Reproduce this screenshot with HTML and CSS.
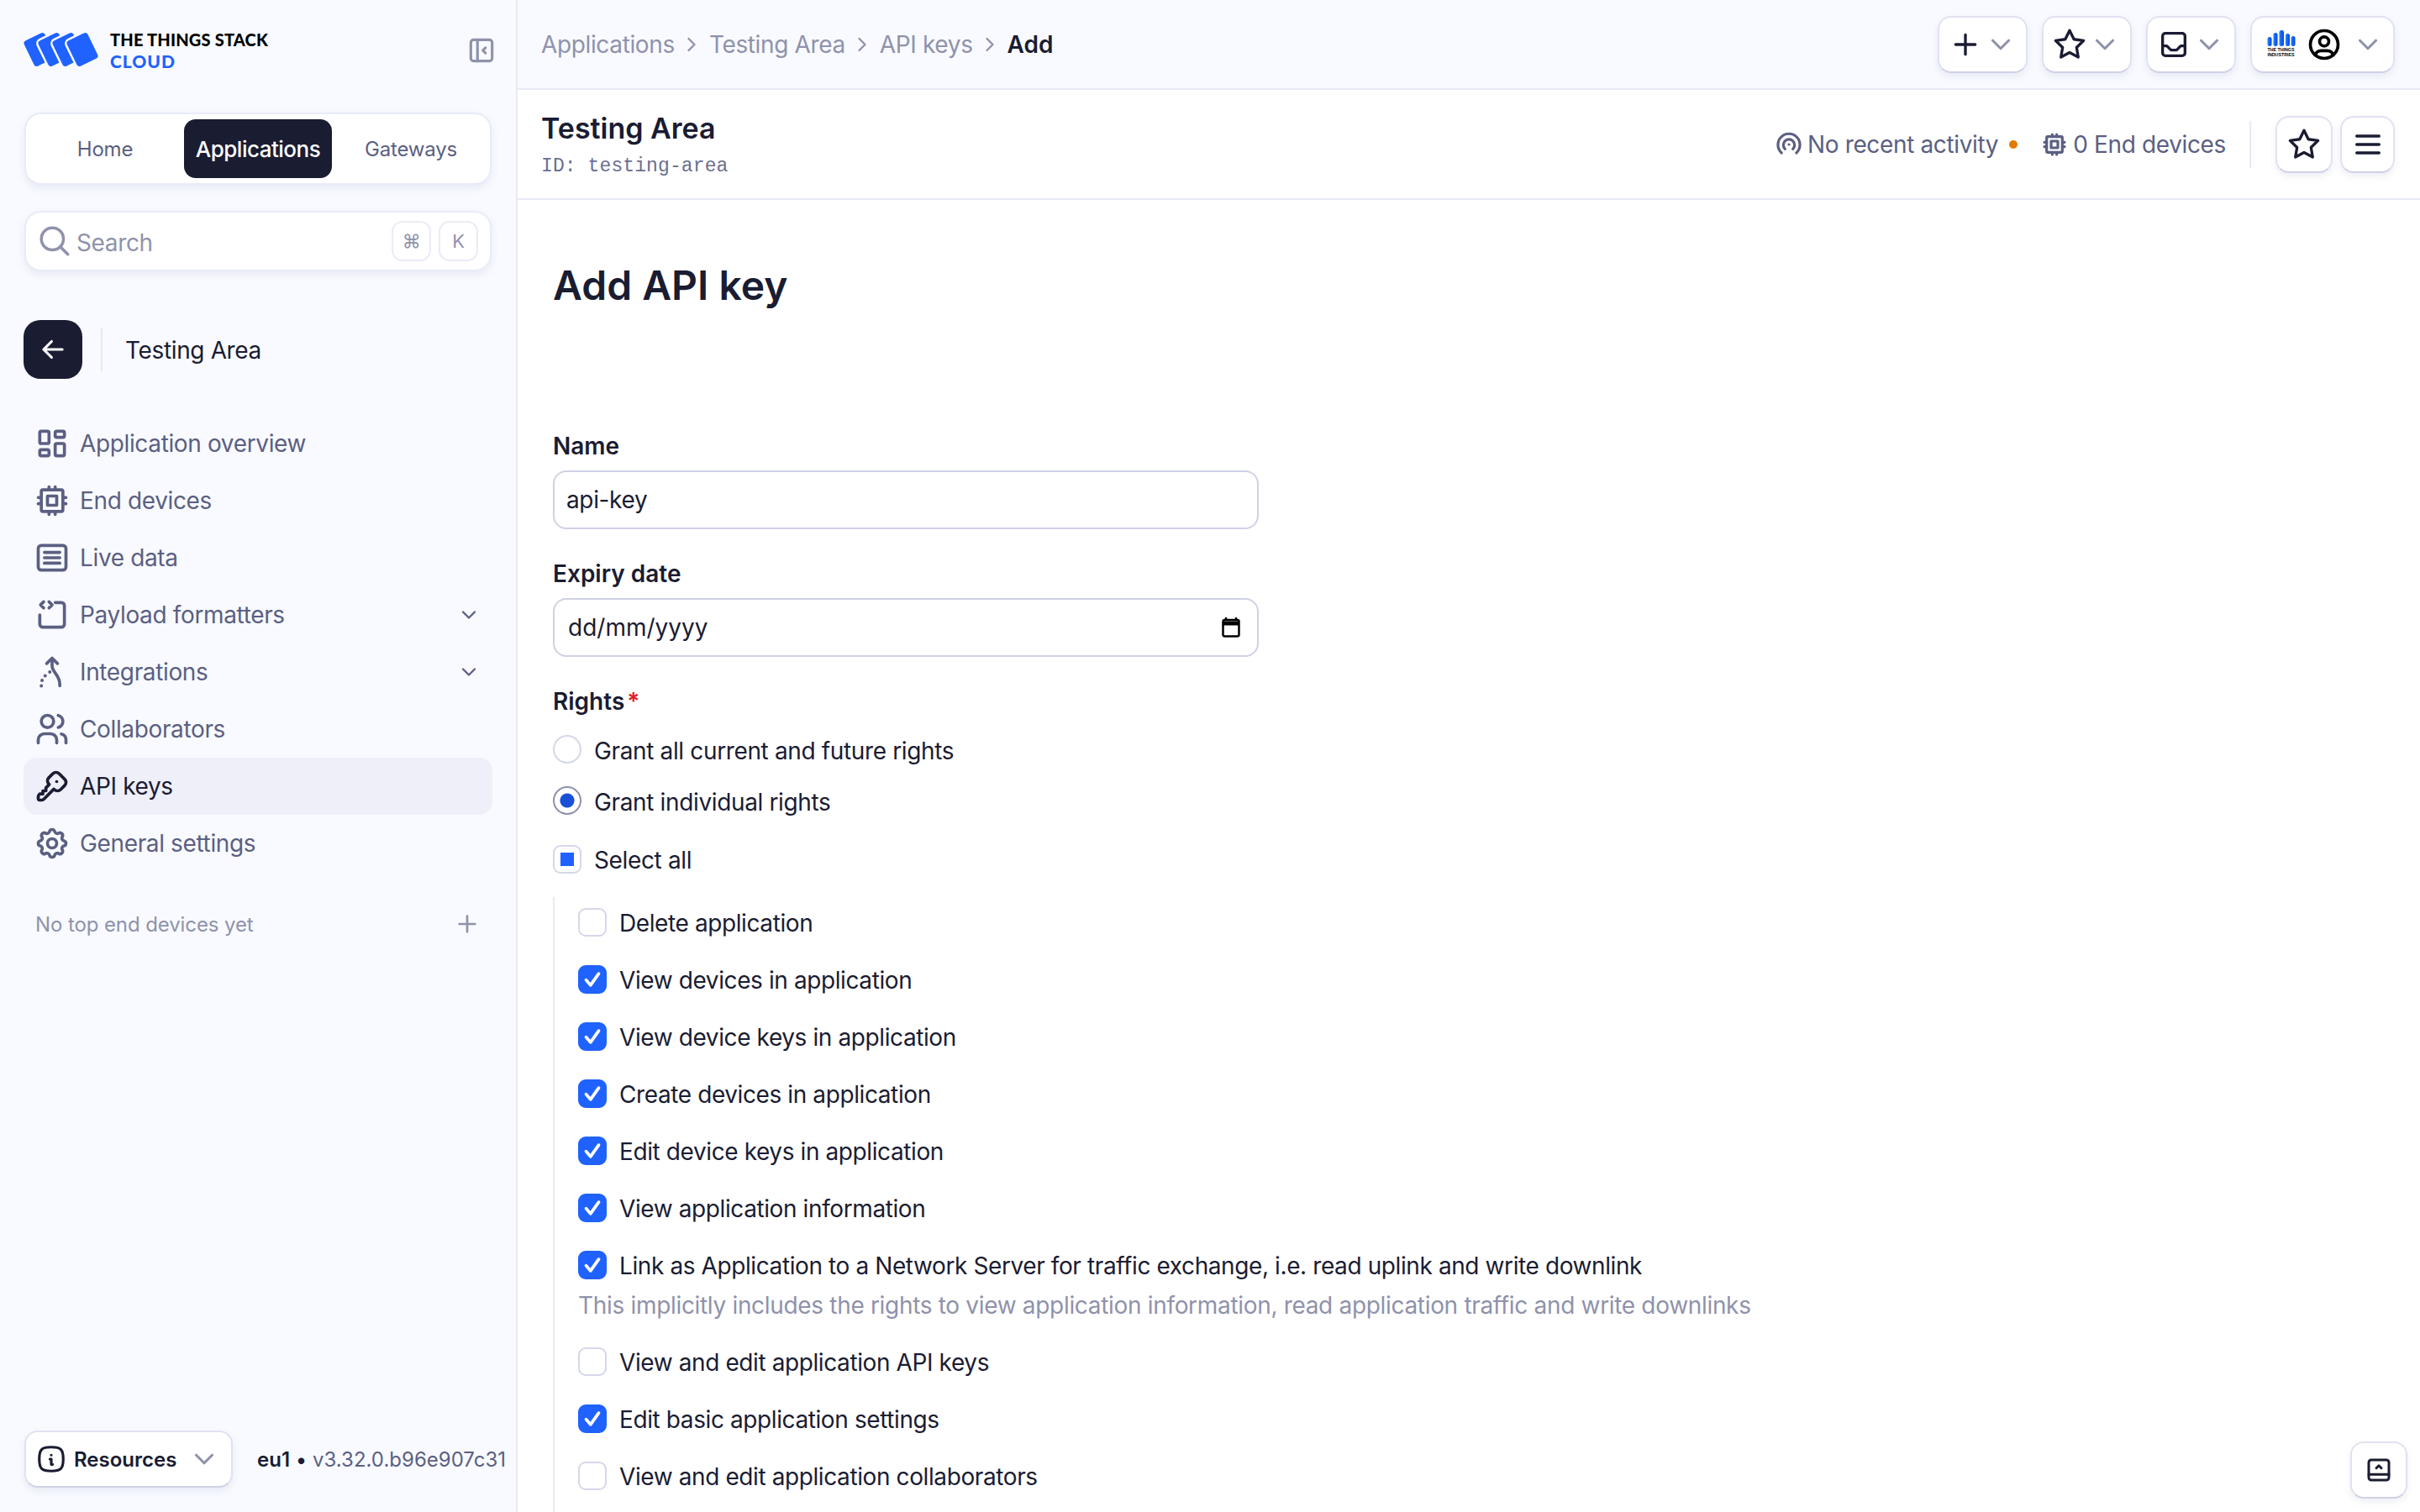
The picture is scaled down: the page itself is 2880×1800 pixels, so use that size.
FILE: index.html
```html
<!DOCTYPE html>
<html lang="en">
<head>
    <meta charset="UTF-8">
    <meta name="viewport" content="width=device-width, initial-scale=1.0">
    <title>Add API key</title>

    <link rel="stylesheet" href="styles.css">
</head>
<body>

    <!-- Icon set, used through <use> below -->
    <svg class="sprite" xmlns="http://www.w3.org/2000/svg">
        <symbol id="i-chevron" viewBox="0 0 24 24"><path d="M6 9l6 6 6-6"/></symbol>
        <symbol id="i-chevron-right" viewBox="0 0 24 24"><path d="M9 6l6 6-6 6"/></symbol>
        <symbol id="i-plus" viewBox="0 0 24 24"><path d="M12 5v14M5 12h14"/></symbol>
        <symbol id="i-star" viewBox="0 0 24 24"><path d="M12 17.75l-6.172 3.245l1.179-6.873l-5-4.867l6.9-1l3.086-6.253l3.086 6.253l6.9 1l-5 4.867l1.179 6.873z"/></symbol>
        <symbol id="i-inbox" viewBox="0 0 24 24"><rect x="4" y="4" width="16" height="16" rx="2"/><path d="M4 13h3l3 3h4l3-3h3"/></symbol>
        <symbol id="i-user" viewBox="0 0 24 24"><circle cx="12" cy="12" r="9"/><circle cx="12" cy="10" r="3"/><path d="M6.168 18.849a4 4 0 0 1 3.832-2.849h4a4 4 0 0 1 3.834 2.855"/></symbol>
        <symbol id="i-cpu" viewBox="0 0 24 24"><rect x="5" y="5" width="14" height="14" rx="1"/><path d="M9 9h6v6H9zM3 10h2M3 14h2M10 3v2M14 3v2M21 10h-2M21 14h-2M14 21v-2M10 21v-2"/></symbol>
        <symbol id="i-signal" viewBox="0 0 24 24"><path d="M8.5 16a5 5 0 1 1 7 0M5.4 19.5a9.8 9.8 0 1 1 13.2 0"/><path d="M12 12v.01"/></symbol>
        <symbol id="i-dashboard" viewBox="0 0 24 24"><rect x="4" y="4" width="6" height="8" rx="1"/><rect x="4" y="16" width="6" height="4" rx="1"/><rect x="14" y="12" width="6" height="8" rx="1"/><rect x="14" y="4" width="6" height="4" rx="1"/></symbol>
        <symbol id="i-live" viewBox="0 0 24 24"><rect x="3" y="4" width="18" height="16" rx="2"/><path d="M7 8.5h10M7 12h10M7 15.5h10"/></symbol>
        <symbol id="i-payload" viewBox="0 0 24 24"><path d="M14 4h4a2 2 0 0 1 2 2v12a2 2 0 0 1-2 2H6a2 2 0 0 1-2-2v-6"/><path d="M6.500 3.500L4.500 5.500l2 2M10 3.500l2 2-2 2"/></symbol>
        <symbol id="i-integrations" viewBox="0 0 24 24"><path d="M8.500 6.500L12 3l3.500 3.500M12 3v5c0 4 5 6 5 12v1"/><path d="M5 21v.01M5.500 17.500v.01M7.500 14.500v.01M10.500 12v.01" stroke-width="2.2"/></symbol>
        <symbol id="i-users" viewBox="0 0 24 24"><circle cx="9" cy="7" r="4"/><path d="M3 21v-2a4 4 0 0 1 4-4h4a4 4 0 0 1 4 4v2M16 3.130a4 4 0 0 1 0 7.750M21 21v-2a4 4 0 0 0-3-3.850"/></symbol>
        <symbol id="i-key" viewBox="0 0 24 24"><path d="M16.555 3.843l3.602 3.602a2.877 2.877 0 0 1 0 4.069l-2.643 2.643a2.877 2.877 0 0 1-4.069 0l-.301-.301l-6.558 6.558a2 2 0 0 1-1.239.578l-.175.008h-1.172a1 1 0 0 1-.993-.883l-.007-.117v-1.172a2 2 0 0 1 .467-1.284l.119-.13l.414-.414h2v-2h2v-2l2.144-2.144l-.301-.301a2.877 2.877 0 0 1 0-4.069l2.643-2.643a2.877 2.877 0 0 1 4.069 0z"/><path d="M15 9h.01"/></symbol>
        <symbol id="i-settings" viewBox="0 0 24 24"><path d="M10.325 4.317c.426-1.756 2.924-1.756 3.35 0a1.724 1.724 0 0 0 2.573 1.066c1.543-.94 3.31.826 2.37 2.37a1.724 1.724 0 0 0 1.065 2.572c1.756.426 1.756 2.924 0 3.35a1.724 1.724 0 0 0-1.066 2.573c.94 1.543-.826 3.31-2.37 2.37a1.724 1.724 0 0 0-2.572 1.065c-.426 1.756-2.924 1.756-3.35 0a1.724 1.724 0 0 0-2.573-1.066c-1.543.94-3.31-.826-2.37-2.37a1.724 1.724 0 0 0-1.065-2.572c-1.756-.426-1.756-2.924 0-3.35a1.724 1.724 0 0 0 1.066-2.573c-.94-1.543.826-3.31 2.37-2.37c1 .608 2.296.07 2.572-1.065z"/><circle cx="12" cy="12" r="3"/></symbol>
        <symbol id="i-check" viewBox="0 0 24 24"><path d="M6 12.500l4.200 5L18 6.500"/></symbol>
    </svg>

    <div class="app">

        <!-- Left column -->
        <aside class="sidebar">
            <div class="brand">
                <svg class="brand-mark" viewBox="0 0 100 50">
                    <g class="brand-cards">
                        <rect x="5" y="6" width="30" height="36" rx="5" transform="rotate(-26 20 24)"/>
                        <rect x="22" y="6" width="30" height="36" rx="5" transform="rotate(-26 37 24)"/>
                        <rect x="39" y="6" width="30" height="36" rx="5" transform="rotate(-26 54 24)"/>
                        <rect x="56" y="6" width="30" height="36" rx="5" transform="rotate(-26 71 24)"/>
                    </g>
                </svg>
                <div class="brand-name">
                    <span class="brand-top">THE THINGS STACK</span>
                    <span class="brand-sub">CLOUD</span>
                </div>
                <svg class="icon collapse" viewBox="0 0 24 24"><rect x="4" y="4" width="16" height="16" rx="2"/><path d="M9 4v16M15 10l-2 2 2 2"/></svg>
            </div>

            <div class="tabs">
                <a class="tab">Home</a>
                <a class="tab active">Applications</a>
                <a class="tab">Gateways</a>
            </div>

            <div class="search">
                <svg class="icon" viewBox="0 0 24 24"><circle cx="10.500" cy="10.500" r="7.500"/><path d="M21 21l-5.200-5.200"/></svg>
                <span class="search-text">Search</span>
                <kbd>⌘</kbd>
                <kbd>K</kbd>
            </div>

            <div class="context">
                <button class="back"><svg class="icon" viewBox="0 0 24 24"><path d="M5 12h14M5 12l6 6M5 12l6-6"/></svg></button>
                <span class="context-name">Testing Area</span>
            </div>

            <nav class="nav">
                <a class="nav-item"><svg class="icon"><use href="#i-dashboard"/></svg>Application overview</a>
                <a class="nav-item"><svg class="icon"><use href="#i-cpu"/></svg>End devices</a>
                <a class="nav-item"><svg class="icon"><use href="#i-live"/></svg>Live data</a>
                <a class="nav-item"><svg class="icon"><use href="#i-payload"/></svg>Payload formatters<svg class="icon nav-more"><use href="#i-chevron"/></svg></a>
                <a class="nav-item"><svg class="icon"><use href="#i-integrations"/></svg>Integrations<svg class="icon nav-more"><use href="#i-chevron"/></svg></a>
                <a class="nav-item"><svg class="icon"><use href="#i-users"/></svg>Collaborators</a>
                <a class="nav-item current"><svg class="icon"><use href="#i-key"/></svg>API keys</a>
                <a class="nav-item"><svg class="icon"><use href="#i-settings"/></svg>General settings</a>
            </nav>

            <div class="top-devices">
                <span>No top end devices yet</span>
                <svg class="icon"><use href="#i-plus"/></svg>
            </div>

            <div class="sidebar-foot">
                <button class="btn resources">
                    <svg class="icon" viewBox="0 0 24 24"><path d="M12 9h.01M11 12h1v4h1"/><path d="M12 3c7.200 0 9 1.800 9 9s-1.800 9-9 9-9-1.800-9-9 1.800-9 9-9z"/></svg>
                    <span>Resources</span>
                    <svg class="icon chev"><use href="#i-chevron"/></svg>
                </button>
                <p class="version"><b>eu1</b> • <span>v3.32.0.b96e907c31</span></p>
            </div>
        </aside>

        <!-- Right column -->
        <main class="main">
            <header class="topbar">
                <div class="crumbs">
                    <a>Applications</a><svg class="icon"><use href="#i-chevron-right"/></svg>
                    <a>Testing Area</a><svg class="icon"><use href="#i-chevron-right"/></svg>
                    <a>API keys</a><svg class="icon"><use href="#i-chevron-right"/></svg>
                    <b>Add</b>
                </div>
                <div class="top-actions">
                    <button class="btn"><svg class="icon"><use href="#i-plus"/></svg><svg class="icon chev"><use href="#i-chevron"/></svg></button>
                    <button class="btn"><svg class="icon"><use href="#i-star"/></svg><svg class="icon chev"><use href="#i-chevron"/></svg></button>
                    <button class="btn"><svg class="icon"><use href="#i-inbox"/></svg><svg class="icon chev"><use href="#i-chevron"/></svg></button>
                    <button class="btn account">
                        <svg class="org-logo" viewBox="0 0 36 36">
                            <defs>
                                <linearGradient id="org-blue" x1="0" y1="0" x2="1" y2="0">
                                    <stop offset="0" stop-color="#1f86ff"/>
                                    <stop offset="1" stop-color="#0a3fe0"/>
                                </linearGradient>
                            </defs>
                            <g fill="url(#org-blue)">
                                <rect x="1.500" y="9" width="5" height="11" rx="2.500"/>
                                <rect x="8.500" y="4" width="5" height="16" rx="2.500"/>
                                <rect x="15.500" y="1" width="5.500" height="19" rx="2.500"/>
                                <rect x="23" y="5" width="5" height="15" rx="2.500"/>
                                <rect x="29.500" y="8" width="5" height="12" rx="2.500"/>
                            </g>
                            <text x="1.500" y="26" textLength="32" lengthAdjust="spacingAndGlyphs">THE THINGS</text>
                            <text x="1.500" y="32" textLength="32" lengthAdjust="spacingAndGlyphs">INDUSTRIES</text>
                        </svg>
                        <svg class="icon user"><use href="#i-user"/></svg>
                        <svg class="icon chev"><use href="#i-chevron"/></svg>
                    </button>
                </div>
            </header>

            <section class="page-head">
                <div>
                    <h2>Testing Area</h2>
                    <p class="app-id">ID: testing-area</p>
                </div>
                <div class="page-stats">
                    <span class="stat"><svg class="icon"><use href="#i-signal"/></svg>No recent activity<i class="dot"></i></span>
                    <span class="stat"><svg class="icon"><use href="#i-cpu"/></svg>0 End devices</span>
                    <span class="rule"></span>
                    <div class="head-btns">
                        <button class="btn square"><svg class="icon"><use href="#i-star"/></svg></button>
                        <button class="btn square narrow"><svg class="icon" viewBox="0 0 24 24"><path d="M4 6h16M4 12h16M4 18h16"/></svg></button>
                    </div>
                </div>
            </section>

            <section class="content">
                <h1>Add API key</h1>

                <form class="form">
                    <label class="label">Name</label>
                    <div class="input"><input type="text" value="api-key"></div>

                    <label class="label">Expiry date</label>
                    <div class="input">
                        <input class="date-text" type="text" value="dd/mm/yyyy">
                        <svg class="calendar" viewBox="0 0 22 24"><path d="M5 0v4M17 0v4"/><rect x="1.500" y="3" width="19" height="19.500" rx="2"/><path class="calendar-top" d="M1.500 7h19"/></svg>
                    </div>

                    <label class="label">Rights<em>*</em></label>
                    <div class="choice radio-row"><span class="radio"></span>Grant all current and future rights</div>
                    <div class="choice radio-row spaced"><span class="radio on"></span>Grant individual rights</div>
                    <div class="choice select-all"><span class="box some"></span>Select all</div>

                    <div class="rights">
                        <div class="choice"><span class="box"></span>Delete application</div>
                        <div class="choice"><span class="box on"><svg><use href="#i-check"/></svg></span>View devices in application</div>
                        <div class="choice"><span class="box on"><svg><use href="#i-check"/></svg></span>View device keys in application</div>
                        <div class="choice"><span class="box on"><svg><use href="#i-check"/></svg></span>Create devices in application</div>
                        <div class="choice"><span class="box on"><svg><use href="#i-check"/></svg></span>Edit device keys in application</div>
                        <div class="choice"><span class="box on"><svg><use href="#i-check"/></svg></span>View application information</div>
                        <div class="choice with-note"><span class="box on"><svg><use href="#i-check"/></svg></span>Link as Application to a Network Server for traffic exchange, i.e. read uplink and write downlink</div>
                        <p class="note">This implicitly includes the rights to view application information, read application traffic and write downlinks</p>
                        <div class="choice"><span class="box"></span>View and edit application API keys</div>
                        <div class="choice"><span class="box on"><svg><use href="#i-check"/></svg></span>Edit basic application settings</div>
                        <div class="choice"><span class="box"></span>View and edit application collaborators</div>
                    </div>
                </form>
            </section>

            <button class="btn float">
                <svg class="icon" viewBox="0 0 24 24"><rect x="4" y="4" width="16" height="16" rx="2"/><path d="M4 15.500h16M10 10.500l2-2 2 2"/></svg>
            </button>
        </main>
    </div>

</body>
</html>
```

FILE: styles.css
```css
* {
    box-sizing: border-box;
}

html, body {
    margin: 0;
    height: 100%;
    overflow: hidden;
}

body {
    color: #1a1c32;
    background-color: #ffffff;
    font-family: "Inter", "Liberation Sans", sans-serif;
    font-size: 28px;
    letter-spacing: -0.36px;
}

button {
    font: inherit;
    color: inherit;
    cursor: pointer;
}

p, h1, h2 {
    margin: 0;
}

.sprite {
    display: none;
}

.icon {
    display: block;
    flex: none;
    width: 40px;
    height: 40px;
    fill: none;
    stroke: currentColor;
    stroke-width: 2;
    stroke-linecap: round;
    stroke-linejoin: round;
}

.app {
    display: flex;
    height: 1800px;
}

/* For the left column */
.sidebar {
    display: flex;
    flex-direction: column;
    flex: none;
    width: 616px;
    padding: 0 28px 29px;
    background-color: #f8faff;
    border-right: 2px solid #e7e9f6;
}

.brand {
    display: flex;
    align-items: center;
    height: 120px;
    margin-bottom: 14px;
}

.brand-mark {
    flex: none;
    width: 100px;
    height: 50px;
    margin: 0 4px 0 -1px;
}

.brand-cards rect {
    fill: #1f62ff;
    stroke: #f8faff;
    stroke-width: 2.5;
}

.brand-name {
    display: flex;
    flex-direction: column;
    flex: 1;
    font-family: "Lato", sans-serif;
    font-weight: 900;
    line-height: 25px;
}

.brand-top {
    font-size: 20px;
    color: #000000;
    letter-spacing: 0.2px;
}

.brand-sub {
    font-size: 21px;
    color: #1f62ff;
    letter-spacing: 1px;
}

.collapse {
    width: 38px;
    height: 38px;
    margin-right: -6px;
    color: #8f92ab;
}

.tabs {
    display: flex;
    height: 86px;
    margin: 0 1px;
    padding: 6px 0;
    background-color: #ffffff;
    border: 2px solid #e9ebf7;
    border-radius: 20px;
    box-shadow: 0 4px 10px rgba(90, 96, 150, 0.10);
}

.tab {
    display: flex;
    align-items: center;
    justify-content: center;
    flex: 1;
    font-size: 24px;
    letter-spacing: -0.2px;
    color: #5b5f82;
}

.tab.active {
    flex: none;
    width: 176px;
    font-size: 26px;
    color: #ffffff;
    font-weight: 500;
    letter-spacing: -0.5px;
    background-color: #1a1c32;
    border-radius: 14px;
}

.search {
    display: flex;
    align-items: center;
    height: 72px;
    margin: 31px 1px 0;
    padding: 0 14px 0 13px;
    color: #8f92ab;
    background-color: #ffffff;
    border: 2px solid #e9ebf7;
    border-radius: 20px;
    box-shadow: 0 4px 10px rgba(90, 96, 150, 0.10);
}

.search .icon:first-child {
    width: 42px;
    height: 42px;
}

.search-text {
    flex: 1;
    margin-left: 5px;
    padding-top: 3px;
}

kbd {
    display: flex;
    align-items: center;
    justify-content: center;
    width: 47px;
    height: 48px;
    margin-left: 9px;
    font-family: inherit;
    font-size: 22px;
    border: 2px solid #e9ebf7;
    border-radius: 13px;
}

.context {
    display: flex;
    align-items: center;
    margin-top: 58px;
}

.back {
    display: flex;
    align-items: center;
    justify-content: center;
    width: 70px;
    height: 70px;
    padding: 0;
    color: #ffffff;
    background-color: #1a1c32;
    border: none;
    border-radius: 20px;
}

.back .icon {
    width: 38px;
    height: 38px;
}

.context-name {
    margin-left: 22px;
    padding: 3px 0 0 27px;
    line-height: 49px;
    border-left: 2px solid #e7e9f6;
}

.nav {
    margin-top: 43px;
}

.nav-item {
    display: flex;
    align-items: center;
    height: 68px;
    padding: 0 12px;
    color: #5b5f82;
    border-radius: 16px;
}

.nav-item > .icon:first-child {
    width: 44px;
    height: 44px;
    margin-right: 11px;
}

.nav-item.current {
    color: #1a1c32;
    background-color: #eeeff8;
}

.nav-more {
    width: 28px;
    height: 28px;
    margin: 0 2px 0 auto;
}

.top-devices {
    display: flex;
    align-items: center;
    justify-content: space-between;
    height: 40px;
    margin-top: 42px;
    padding: 0 14px;
    font-size: 24px;
    letter-spacing: -0.1px;
    color: #8f92ab;
}

.top-devices .icon {
    width: 32px;
    height: 32px;
}

.sidebar-foot {
    display: flex;
    align-items: center;
    margin-top: auto;
    margin-left: 1px;
}

.version {
    margin-left: 29px;
    font-size: 24px;
    letter-spacing: 0;
    white-space: nowrap;
    color: #1a1c32;
}

.version b {
    font-weight: 600;
}

.version span {
    color: #5b5f82;
}

/* For the white buttons */
.btn {
    display: flex;
    align-items: center;
    flex: none;
    height: 68px;
    padding: 0 11px;
    background-color: #ffffff;
    border: 2px solid #e0e2f1;
    border-bottom-color: #cfd1e6;
    border-radius: 16px;
    box-shadow: 0 4px 8px rgba(90, 96, 150, 0.10);
}

.chev {
    width: 38px;
    height: 38px;
    margin-left: 3px;
    color: #8f92ab;
}

.resources {
    width: 248px;
    font-size: 24px;
    font-weight: 600;
    letter-spacing: 0;
}

.resources .icon:first-child {
    width: 38px;
    height: 38px;
}

.resources span {
    flex: 1;
    margin-left: 8px;
    text-align: left;
}

.resources .chev {
    margin: 0 2px 0 0;
}

/* For the right column */
.main {
    position: relative;
    display: flex;
    flex-direction: column;
    flex: 1;
    min-width: 0;
}

.topbar {
    display: flex;
    align-items: center;
    justify-content: space-between;
    flex: none;
    height: 107px;
    padding: 0 30px 0 28px;
    background-color: #f8faff;
    border-bottom: 2px solid #e7e9f6;
}

.crumbs {
    display: flex;
    align-items: center;
    color: #8f92ab;
}

.crumbs .icon {
    width: 28px;
    height: 28px;
    margin: 0 6.5px;
}

.crumbs b {
    font-weight: 600;
    letter-spacing: 0;
    color: #1a1c32;
}

.top-actions {
    display: flex;
    gap: 17px;
}

.account {
    padding: 0 11px 0 17px;
}

.org-logo {
    flex: none;
    width: 36px;
    height: 36px;
}

.org-logo text {
    font-family: "Liberation Sans", sans-serif;
    font-size: 5.500px;
    font-weight: 700;
    letter-spacing: 0;
    fill: #000000;
}

.user {
    width: 44px;
    height: 44px;
    margin-left: 11px;
    color: #000000;
}

.account .chev {
    margin-left: 11px;
}

.page-head {
    display: flex;
    align-items: center;
    justify-content: space-between;
    flex: none;
    height: 131px;
    padding: 0 30px 0 28px;
    border-bottom: 2px solid #e7e9f6;
}

.page-head h2 {
    font-size: 34px;
    font-weight: 600;
    line-height: 44px;
    letter-spacing: 0;
}

.app-id {
    margin-top: 9px;
    font-family: "Liberation Mono", monospace;
    font-size: 23px;
    line-height: 28px;
    letter-spacing: 0.1px;
    color: #6b6f90;
}

.page-stats {
    display: flex;
    align-items: center;
    color: #5b5f82;
}

.stat {
    display: flex;
    align-items: center;
    margin-right: 28px;
}

.stat .icon {
    width: 32px;
    height: 32px;
    margin-right: 6px;
    stroke-width: 2.4;
}

.dot {
    width: 10px;
    height: 10px;
    margin-left: 13px;
    background-color: #e17a00;
    border-radius: 50%;
}

.rule {
    width: 2px;
    height: 56px;
    background-color: #e7e9f6;
}

.head-btns {
    display: flex;
    gap: 9px;
    margin-left: 29px;
}

.square {
    justify-content: center;
    width: 68px;
    padding: 0;
    color: #1a1c32;
}

.narrow {
    width: 65px;
}

.content {
    flex: 1;
    min-height: 0;
    padding: 72px 42px 0;
    overflow: hidden;
}

.content h1 {
    font-size: 48px;
    font-weight: 600;
    line-height: 60px;
    letter-spacing: 0;
}

/* For the form */
.form {
    width: 840px;
    margin-top: 142px;
}

.label {
    display: block;
    height: 34px;
    margin-bottom: 14px;
    font-weight: 600;
    line-height: 38px;
    letter-spacing: 0;
}

.label em {
    margin-left: 3px;
    font-style: normal;
    color: #e0202a;
}

.input {
    display: flex;
    align-items: center;
    height: 70px;
    margin-bottom: 34px;
    padding: 0 20px 0 14px;
    border: 2px solid #cfd1e6;
    border-radius: 16px;
}

.input input {
    flex: 1;
    min-width: 0;
    padding: 0;
    font: inherit;
    letter-spacing: inherit;
    color: inherit;
    border: none;
    outline: none;
}

.input .date-text {
    padding-left: 2px;
    letter-spacing: 0;
}

.calendar {
    flex: none;
    width: 22px;
    height: 24px;
    fill: none;
    stroke: #000000;
    stroke-width: 2.5;
}

.calendar-top {
    stroke-width: 5;
}

.choice {
    display: flex;
    align-items: flex-start;
    gap: 15px;
    height: 34px;
    margin-bottom: 27px;
    line-height: 36px;
    white-space: nowrap;
}

.label + .choice {
    margin-top: 25px;
}

.choice.radio-row {
    line-height: 39px;
}

.choice.spaced {
    margin-bottom: 36px;
}

.choice.select-all {
    margin-bottom: 28px;
}

.radio, .box {
    display: block;
    flex: none;
    width: 34px;
    height: 34px;
    background-color: #ffffff;
    border: 2px solid #d5d7ea;
}

.radio {
    border-radius: 50%;
}

.radio.on {
    border-color: #8f92ab;
    background: radial-gradient(circle, #1a4fd8 0 8px, #ffffff 9px);
}

.box {
    border-radius: 9px;
}

.box.some {
    background: linear-gradient(#1f62ff, #1f62ff) center / 16px 16px no-repeat #ffffff;
}

.box.on {
    background-color: #1f62ff;
    border-color: #1f62ff;
}

.box svg {
    display: block;
    width: 30px;
    height: 30px;
    fill: none;
    stroke: #ffffff;
    stroke-width: 3;
    stroke-linecap: round;
    stroke-linejoin: round;
}

/* For the nested list of rights */
.rights {
    padding: 13px 0 60px 28px;
    border-left: 2px solid #e7e9f6;
}

.rights .choice {
    margin-bottom: 34px;
    letter-spacing: -0.4px;
}

.rights .with-note {
    margin-bottom: 14px;
}

.note {
    height: 34px;
    margin-bottom: 33px;
    line-height: 34px;
    letter-spacing: -0.32px;
    white-space: nowrap;
    color: #8f92ab;
}

.float {
    position: absolute;
    right: 15px;
    bottom: 16px;
    justify-content: center;
    width: 68px;
    padding: 0;
}

.float .icon {
    width: 36px;
    height: 36px;
}
```
